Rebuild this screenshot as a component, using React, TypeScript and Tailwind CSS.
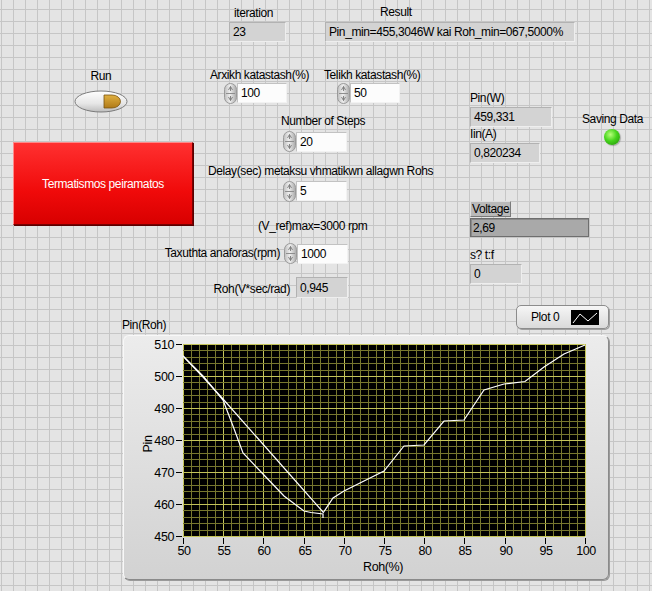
import type { ReactNode } from 'react'

// LabVIEW-style front panel: each control group sits on the panel canvas at its own place,
// inside a group the label and the boxes flow.

const PLOT_W = 402
const PLOT_H = 192
const OX = 59 // plot origin inside the graph frame svg
const OY = 8

// curves traced in page pixels, shifted to plot coordinates below
const CURVE_A = [
  [182, 355], [202, 375], [222, 399], [232, 425], [242, 452], [262, 473], [283, 495],
  [303, 510], [310, 511.5], [322, 513], [322, 517],
]
const CURVE_B = [[182, 355], [202, 376], [222, 398], [322, 511]]
const CURVE_C = [
  [322, 512], [332, 497], [343, 490], [363, 480], [383, 470], [403, 445], [423, 444],
  [443, 420], [463, 419], [483, 389], [503, 383], [524, 380.5], [543, 366], [563, 353],
  [584, 344],
]

const toPoints = (pts: number[][]) =>
  pts.map(([x, y]) => `${x - 182 + OX},${y - 343 + OY}`).join(' ')

function Label({ className = '', children }: { className?: string; children: ReactNode }) {
  return <div className={`whitespace-nowrap leading-[15px] ${className}`}>{children}</div>
}

function Indicator({ className, value }: { className: string; value: string }) {
  return (
    <div
      className={`flex items-center whitespace-nowrap border border-t-[#b2b2b2] border-l-[#b2b2b2] border-r-[#eeeeee] border-b-[#eeeeee] bg-[#d3d3d3] pl-[3px] leading-none ${className}`}
    >
      {value}
    </div>
  )
}

function Spinner() {
  return (
    <svg className="shrink-0" width="13" height="21" viewBox="0 0 13 21">
      <defs>
        <linearGradient id="spin" x1="0" x2="1" y1="0" y2="0">
          <stop offset="0" stopColor="#bdbdbd" />
          <stop offset="0.45" stopColor="#eeeeee" />
          <stop offset="1" stopColor="#a9a9a9" />
        </linearGradient>
      </defs>
      <rect x="0.5" y="0.5" width="12" height="20" rx="6" fill="url(#spin)" stroke="#9a9a9a" />
      <line x1="2" y1="10.5" x2="11" y2="10.5" stroke="#8e8e8e" />
      <path d="M6.5 3.5 L4.5 7 M6.5 3.5 L8.5 7 M6.5 3.5 V8" stroke="#7a7a7a" strokeWidth="0.9" fill="none" />
      <path d="M6.5 17.5 L4.5 14 M6.5 17.5 L8.5 14 M6.5 17.5 V13" stroke="#7a7a7a" strokeWidth="0.9" fill="none" />
    </svg>
  )
}

function NumInput({ className, value }: { className: string; value: string }) {
  return (
    <div
      className={`flex items-center border border-t-[#c2c2c2] border-l-[#c2c2c2] border-r-[#f2f2f2] border-b-[#f2f2f2] bg-[#fcfcfc] pl-[3px] leading-none ${className}`}
    >
      {value}
    </div>
  )
}

function Chart() {
  const minorX = Array.from({ length: 51 }, (_, i) => i)
  const minorY = Array.from({ length: 31 }, (_, i) => i)
  const xTicks = [50, 55, 60, 65, 70, 75, 80, 85, 90, 95, 100]
  const yTicks = [510, 500, 490, 480, 470, 460, 450]
  return (
    <svg className="block" width="486" height="245" viewBox="0 0 486 245">
      <rect x={OX} y={OY} width={PLOT_W} height={PLOT_H} fill="#000000" />
      {minorX.map((i) => (
        <line
          key={`vx${i}`}
          x1={OX + 0.5 + Math.round(i * 8.04)}
          x2={OX + 0.5 + Math.round(i * 8.04)}
          y1={OY}
          y2={OY + PLOT_H}
          stroke={i % 5 === 0 ? '#c4c45a' : '#77772e'}
          strokeWidth="1"
        />
      ))}
      {minorY.map((i) => (
        <line
          key={`hy${i}`}
          x1={OX}
          x2={OX + PLOT_W}
          y1={OY + 0.5 + Math.round(i * 6.4)}
          y2={OY + 0.5 + Math.round(i * 6.4)}
          stroke={i % 5 === 0 ? '#c4c45a' : '#77772e'}
          strokeWidth="1"
        />
      ))}
      <polyline points={toPoints(CURVE_B)} fill="none" stroke="#ffffff" strokeWidth="1.2" />
      <polyline points={toPoints(CURVE_A)} fill="none" stroke="#ffffff" strokeWidth="1.2" />
      <polyline points={toPoints(CURVE_C)} fill="none" stroke="#ffffff" strokeWidth="1.2" />
      <g fontSize="12.5" letterSpacing="-0.4" fill="#000">
        {yTicks.map((v, i) => {
          const y = OY + i * 32
          return (
            <g key={`yt${v}`}>
              <line x1={OX - 7} x2={OX - 1} y1={y + 0.5} y2={y + 0.5} stroke="#000" />
              <text x={OX - 9} y={y + 5} textAnchor="end">
                {v}
              </text>
            </g>
          )
        })}
        {xTicks.map((v, i) => {
          const x = OX + Math.round(i * 40.2)
          return (
            <g key={`xt${v}`}>
              <line x1={x + 0.5} x2={x + 0.5} y1={OY + PLOT_H + 2} y2={OY + PLOT_H + 8} stroke="#000" />
              <text x={x + 1} y={219} textAnchor="middle">
                {v}
              </text>
            </g>
          )
        })}
        <text x="259" y="235" textAnchor="middle">
          Roh(%)
        </text>
        <text x="28" y="108" textAnchor="middle" transform="rotate(-90 28 108)">
          Pin
        </text>
      </g>
    </svg>
  )
}

export default function App() {
  return (
    <div className="relative h-[591px] w-[652px] overflow-hidden bg-[#e4e4e4] font-['Liberation_Sans',Arial,sans-serif] text-[12px] tracking-[-0.4px] text-black [background-image:linear-gradient(to_right,#c6c6c6_1px,transparent_1px),linear-gradient(to_bottom,#c6c6c6_1px,transparent_1px)] [background-position:1px_9px] [background-size:12px_12px]">
      {/* iteration */}
      <div className="absolute left-[229px] top-[6px] flex flex-col gap-[1px]">
        <Label className="pl-[5px]">iteration</Label>
        <Indicator className="h-[20px] w-[57px]" value="23" />
      </div>

      {/* result */}
      <div className="absolute left-[325px] top-[5px] flex flex-col gap-[2px]">
        <Label className="pl-[55px]">Result</Label>
        <Indicator className="h-[20px] w-[250px]" value="Pin_min=455,3046W kai Roh_min=067,5000%" />
      </div>

      {/* run switch */}
      <div className="absolute left-[74px] top-[69px] flex flex-col items-center gap-[6px]">
        <Label>Run</Label>
        <svg width="54" height="23" viewBox="0 0 54 23">
          <defs>
            <linearGradient id="runBody" x1="0" x2="0" y1="0" y2="1">
              <stop offset="0" stopColor="#ffffff" />
              <stop offset="0.6" stopColor="#e6e6e6" />
              <stop offset="1" stopColor="#bdbdbd" />
            </linearGradient>
            <linearGradient id="runD" x1="0" x2="0" y1="0" y2="1">
              <stop offset="0" stopColor="#e0b040" />
              <stop offset="1" stopColor="#b07a18" />
            </linearGradient>
          </defs>
          <ellipse cx="27" cy="11.5" rx="26" ry="10.5" fill="url(#runBody)" stroke="#7c7c7c" />
          <path d="M30 5 H38 A8.5 6.5 0 0 1 38 18 H30 Z" fill="url(#runD)" stroke="#7a5410" strokeWidth="0.8" />
        </svg>
      </div>

      {/* start / end */}
      <div className="absolute left-[210px] top-[68px] flex flex-col">
        <Label>Arxikh katastash(%)</Label>
        <div className="ml-[14px] flex">
          <Spinner />
          <NumInput className="h-[20px] w-[50px]" value="100" />
        </div>
      </div>
      <div className="absolute left-[324px] top-[68px] flex flex-col">
        <Label>Telikh katastash(%)</Label>
        <div className="ml-[13px] flex">
          <Spinner />
          <NumInput className="h-[20px] w-[50px]" value="50" />
        </div>
      </div>

      {/* measured values column */}
      <div className="absolute left-[470px] top-[91px] flex flex-col items-start">
        <Label>Pin(W)</Label>
        <Indicator className="mt-[1px] h-[20px] w-[82px]" value="459,331" />
        <Label className="leading-[14px]">Iin(A)</Label>
        <Indicator className="mt-[1px] h-[20px] w-[70px]" value="0,820234" />
        <div className="mt-[38px] flex h-[16px] items-center border border-t-[#dedede] border-l-[#dedede] border-r-[#7a7a7a] border-b-[#7a7a7a] bg-[#b9b9b9] px-[1px] leading-none">
          Voltage
        </div>
        <div className="mt-[1px] flex h-[19px] w-[119px] items-center border border-[#6e6e6e] bg-[#a9a9a9] pl-[2px] leading-none shadow-[inset_1px_1px_0_#8a8a8a]">
          2,69
        </div>
        <Label className="mt-[11px]">s? t:f</Label>
        <Indicator className="mt-[1px] h-[20px] w-[52px]" value="0" />
      </div>

      {/* saving LED */}
      <div className="absolute left-[582px] top-[112px] flex flex-col items-center gap-[2px]">
        <Label>Saving Data</Label>
        <div className="h-[16px] w-[16px] rounded-full bg-[radial-gradient(circle_at_40%_35%,#b8ff7a_0%,#46d41c_45%,#1e8a06_100%)] shadow-[1px_1px_1px_rgba(0,0,0,0.25)]" />
      </div>

      {/* steps */}
      <div className="absolute left-[281px] top-[114px] flex flex-col">
        <Label>Number of Steps</Label>
        <div className="ml-[2px] mt-[2px] flex items-start">
          <Spinner />
          <NumInput className="mt-[1px] h-[20px] w-[51px]" value="20" />
        </div>
      </div>

      {/* stop button */}
      <div className="absolute left-[13px] top-[142px] flex h-[83px] w-[180px] items-center justify-center border border-t-[#ff8a8a] border-l-[#ff8a8a] border-r-[#7a0000] border-b-[#7a0000] bg-[linear-gradient(to_bottom,#ff3030,#f00a0a_60%,#d80000)] text-white shadow-[1px_1px_0_#5a0000]">
        Termatismos peiramatos
      </div>

      {/* delay */}
      <div className="absolute left-[208px] top-[164px] flex flex-col">
        <Label>Delay(sec) metaksu vhmatikwn allagwn Rohs</Label>
        <div className="ml-[75px] mt-[2px] flex">
          <Spinner />
          <NumInput className="h-[20px] w-[51px]" value="5" />
        </div>
      </div>

      <Label className="absolute left-[258px] top-[219px]">(V_ref)max=3000 rpm</Label>

      {/* speed reference and Roh */}
      <div className="absolute left-[140px] top-[243px] flex w-[208px] flex-col items-end gap-[13px]">
        <div className="flex items-center">
          <Label className="mr-[4px]">Taxuthta anaforas(rpm)</Label>
          <Spinner />
          <NumInput className="h-[20px] w-[51px]" value="1000" />
        </div>
        <div className="flex items-center">
          <Label className="mr-[6px] mt-[4px]">Roh(V*sec/rad)</Label>
          <Indicator className="h-[21px] w-[52px]" value="0,945" />
        </div>
      </div>

      {/* graph */}
      <div className="absolute left-[122px] top-[305px] flex w-[487px] flex-col">
        <div className="flex items-start justify-between">
          <Label className="mt-[13px]">Pin(Roh)</Label>
          <div className="flex h-[24px] w-[93px] items-center rounded-[5px] border border-[#8c8c8c] bg-[linear-gradient(to_bottom,#f6f6f6,#dadada)] shadow-[1px_1px_0_#a0a0a0]">
            <span className="ml-[14px] leading-none">Plot 0</span>
            <svg className="ml-[12px]" width="28" height="15" viewBox="0 0 28 15">
              <rect width="28" height="15" fill="#000" />
              <polyline points="2,13 9,4 17,11 26,3" fill="none" stroke="#fff" strokeWidth="1" />
            </svg>
          </div>
        </div>
        <div className="ml-[1px] mt-[2px] h-[245px] w-[486px] rounded-[6px] border border-t-[#f8f8f8] border-l-[#f8f8f8] border-r-[#8a8a8a] border-b-[#8a8a8a] bg-[linear-gradient(to_bottom,#ececec,#d2d2d2)] shadow-[1px_1px_0_#9a9a9a]">
          <Chart />
        </div>
      </div>
    </div>
  )
}
